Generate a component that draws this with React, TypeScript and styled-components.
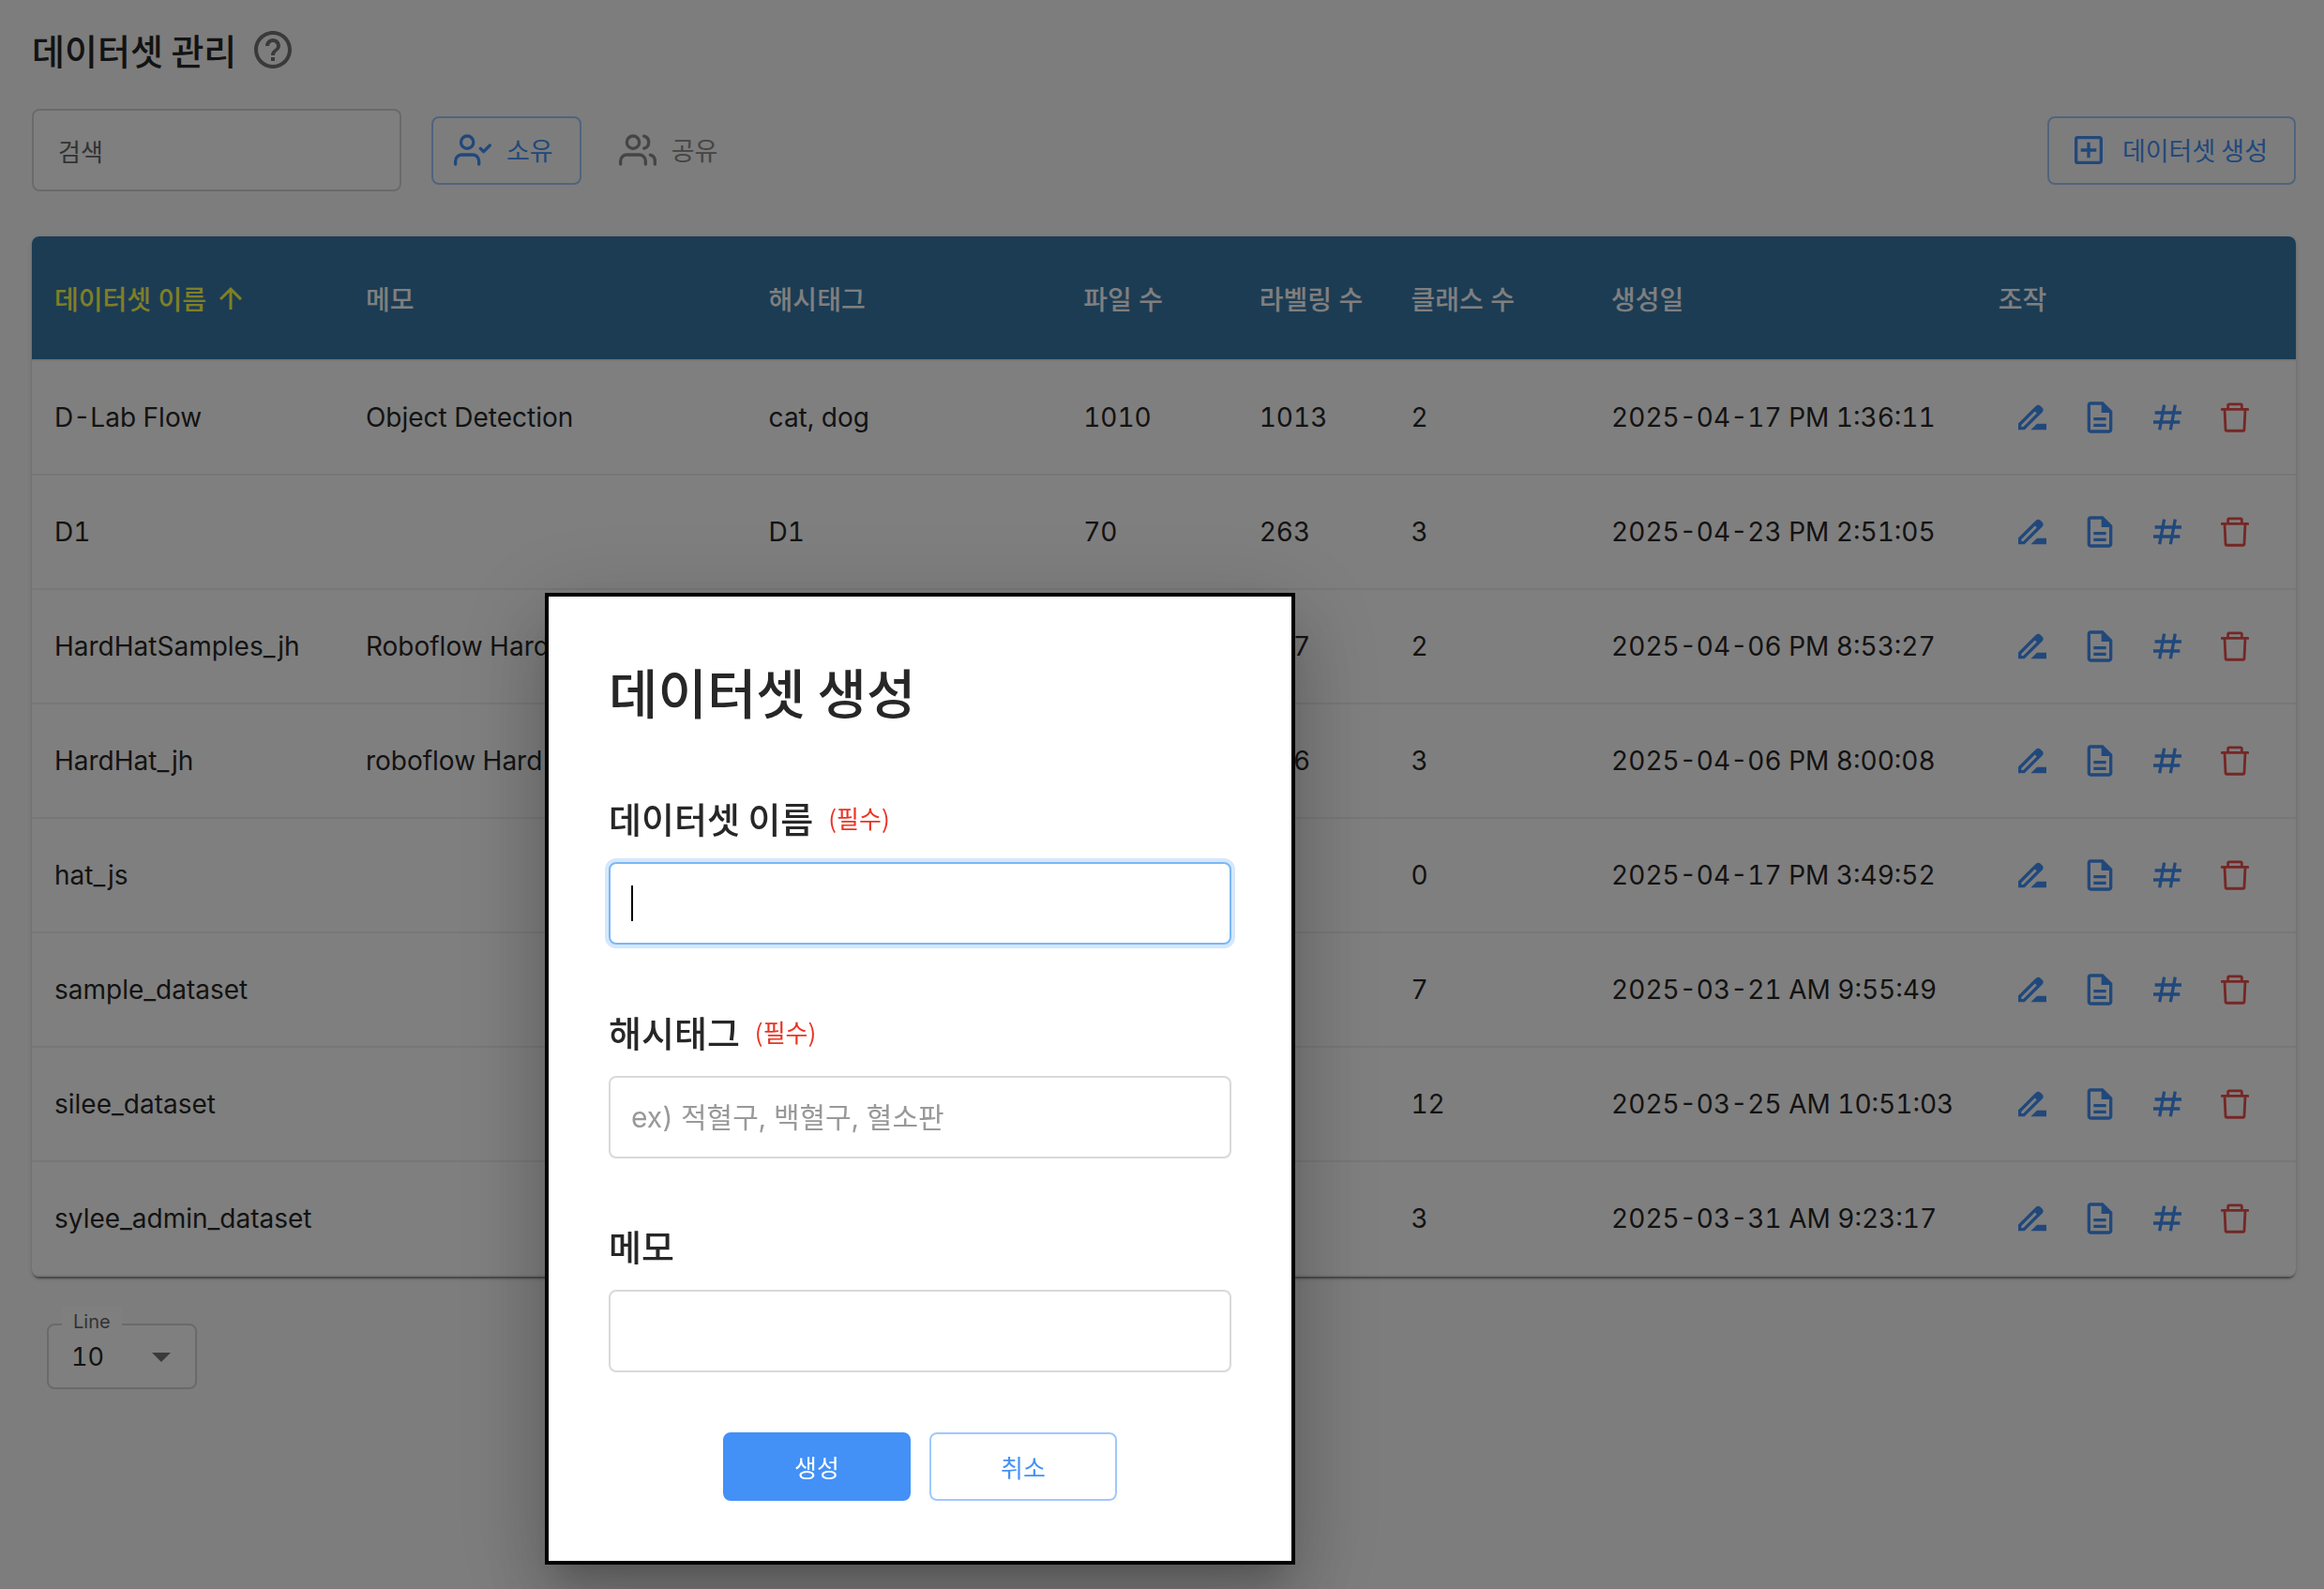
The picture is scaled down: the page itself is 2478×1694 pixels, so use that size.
import React, { useEffect, useRef } from 'react';
import styled, { createGlobalStyle } from 'styled-components';
import { MdHelpOutline, MdDriveFileRenameOutline, MdOutlineDescription, MdOutlineAddBox, MdArrowUpward, MdArrowDropDown } from 'react-icons/md';
import { BiHash } from 'react-icons/bi';
import { AiOutlineDelete } from 'react-icons/ai';
import { FiUserCheck, FiUsers } from 'react-icons/fi';

const korean = '"Noto Sans CJK KR", Inter, sans-serif';

const Global = createGlobalStyle`
  * { box-sizing: border-box; }
  body {
    margin: 0;
    background: #fbfbfb;
    color: #272727;
    font-family: Inter, "Noto Sans CJK KR", sans-serif;
    font-size: 28px;
    font-variant-numeric: tabular-nums;
  }
  button, input, select { font: inherit; color: inherit; }
  button { cursor: pointer; }
`;

const Page = styled.main`
  min-height: 100vh;
  padding: 24px 30px 64px 34px;
`;

const Heading = styled.header`
  display: flex;
  align-items: center;
  gap: 15px;
  height: 58px;
`;

const PageTitle = styled.h1`
  margin: 0;
  font-family: ${korean};
  font-size: 38px;
  line-height: 56px;
  font-weight: 500;
`;

const PlainIcon = styled.button<{ $tone: string }>`
  display: inline-flex;
  padding: 0;
  border: 0;
  background: none;
  color: ${(p) => p.$tone};
`;

const Toolbar = styled.div`
  display: flex;
  align-items: center;
  gap: 32px;
  margin: 34px 0 48px;
`;

const SearchBox = styled.input`
  width: 394px;
  height: 88px;
  padding: 0 26px;
  border: 2px solid #d4d4d4;
  border-radius: 8px;
  background: #fff;
  font-family: ${korean};
  font-size: 26px;
  &::placeholder { color: #666; opacity: 1; }
`;

const Owners = styled.div`
  display: flex;
  gap: 16px;
`;

const ToolButton = styled.button<{ $kind: 'outlined' | 'text' }>`
  display: flex;
  align-items: center;
  gap: 16px;
  height: 73px;
  padding: 0 28px 0 22px;
  border: 2px solid ${(p) => (p.$kind === 'outlined' ? '#a1c8fb' : 'transparent')};
  border-radius: 8px;
  background: none;
  color: ${(p) => (p.$kind === 'outlined' ? '#4391f7' : '#8a8a8a')};
  font-family: ${korean};
  font-size: 27px;
  line-height: 40px;
`;

const CreateButton = styled(ToolButton)`
  margin-left: auto;
`;

const TableCard = styled.section`
  overflow: hidden;
  border-radius: 8px;
  background: #fff;
  box-shadow: 0 4px 2px -2px rgba(0, 0, 0, 0.3), 0 2px 2px rgba(0, 0, 0, 0.14), 0 2px 6px rgba(0, 0, 0, 0.12);
`;

const Table = styled.table`
  width: 100%;
  border-spacing: 0;
  table-layout: fixed;
`;

const Col = styled.col<{ $share: number }>`
  width: ${(p) => p.$share}%;
`;

const HeadCell = styled.th<{ $active?: boolean }>`
  height: 133px;
  padding: 0 0 0 24px;
  border-bottom: 2px solid #efefef;
  background: #3879a8;
  background-clip: padding-box;
  color: ${(p) => (p.$active ? '#ffff4d' : '#fff')};
  font-size: 28px;
  font-weight: 500;
  text-align: left;
  white-space: nowrap;
`;

const SortButton = styled.button`
  display: flex;
  align-items: center;
  gap: 8px;
  padding: 0;
  border: 0;
  background: none;
`;

const Cell = styled.td`
  height: 122px;
  padding: 0 0 0 24px;
  border-bottom: 2px solid #efefef;
  white-space: nowrap;
`;

const Actions = styled.div`
  display: flex;
  gap: 32px;
  padding-left: 16px;
`;

const LineField = styled.div`
  position: relative;
  display: flex;
  align-items: center;
  width: 160px;
  height: 70px;
  margin: 50px 0 0 16px;
`;

const LineLabel = styled.label`
  position: absolute;
  top: -18px;
  left: 16px;
  padding: 0 12px;
  background: #fff;
  color: #666;
  font-size: 20px;
  line-height: 32px;
`;

const LineSelect = styled.select`
  width: 100%;
  height: 100%;
  padding: 0 24px;
  appearance: none;
  border: 2px solid #d4d4d4;
  border-radius: 8px;
  background: #fff;
  font-size: 27px;
`;

const SelectArrow = styled(MdArrowDropDown)`
  position: absolute;
  right: 14px;
  color: #757575;
  pointer-events: none;
`;

const Backdrop = styled.div`
  position: fixed;
  inset: 0;
  background: rgba(0, 0, 0, 0.5);
`;

const Dialog = styled.section`
  position: absolute;
  top: 632px;
  left: 581px;
  width: 800px;
  padding: 64px;
  border: 4px solid #000;
  background: #fff;
  box-shadow: 0 22px 30px -14px rgba(0, 0, 0, 0.2), 0 48px 76px 6px rgba(0, 0, 0, 0.14), 0 18px 92px 16px rgba(0, 0, 0, 0.12);
`;

const DialogTitle = styled.h2`
  margin: 0 0 66px;
  font-family: ${korean};
  font-size: 57px;
  line-height: 73px;
  font-weight: 500;
`;

const Fields = styled.div`
  display: grid;
  gap: 60px;
`;

const FieldLabel = styled.label`
  display: flex;
  align-items: center;
  gap: 16px;
  height: 64px;
  margin-bottom: 16px;
  font-family: ${korean};
  font-size: 38px;
  font-weight: 500;
`;

const Required = styled.span`
  color: #ea3323;
  font-size: 26px;
  font-weight: 400;
`;

const TextInput = styled.input`
  display: block;
  width: 100%;
  height: 88px;
  padding: 0 22px;
  border: 2px solid #d9d9d9;
  border-radius: 8px;
  outline: none;
  background: #fff;
  font-size: 30px;
  caret-color: #000;
  &::placeholder { color: #999; opacity: 1; }
  &:focus {
    border-color: #7ab8f5;
    box-shadow: 0 0 0 4px #d6e7fd;
  }
  &:focus:not([value]), &:focus[value=""] {
    caret-color: transparent;
    background: linear-gradient(#000, #000) 22px center / 2px 38px no-repeat #fff;
  }
`;

const Buttons = styled.div`
  display: flex;
  justify-content: center;
  gap: 20px;
  margin-top: 64px;
`;

const DialogButton = styled.button<{ $filled?: boolean }>`
  width: 200px;
  height: 73px;
  border: 2px solid ${(p) => (p.$filled ? '#4391f7' : '#a1c8fb')};
  border-radius: 8px;
  background: ${(p) => (p.$filled ? '#4391f7' : '#fff')};
  color: ${(p) => (p.$filled ? '#fff' : '#4391f7')};
  font-family: ${korean};
  font-size: 26px;
  line-height: 40px;
`;

const shares = [13.75, 17.8, 13.9, 7.77, 6.7, 8.85, 17.1, 14.13];
const heads = ['메모', '해시태그', '파일 수', '라벨링 수', '클래스 수', '생성일', '조작'];
const rows = [
  ['D-Lab Flow', 'Object Detection', 'cat, dog', '1010', '1013', '2', '2025-04-17 PM 1:36:11'],
  ['D1', '', 'D1', '70', '263', '3', '2025-04-23 PM 2:51:05'],
  ['HardHatSamples_jh', 'Roboflow Hard', '', '', '417', '2', '2025-04-06 PM 8:53:27'],
  ['HardHat_jh', 'roboflow Hard', '', '', '436', '3', '2025-04-06 PM 8:00:08'],
  ['hat_js', '', '', '', '', '0', '2025-04-17 PM 3:49:52'],
  ['sample_dataset', '', '', '', '', '7', '2025-03-21 AM 9:55:49'],
  ['silee_dataset', '', '', '', '', '12', '2025-03-25 AM 10:51:03'],
  ['sylee_admin_dataset', '', '', '', '', '3', '2025-03-31 AM 9:23:17'],
];

const blue = '#4391f7';

export default function App() {
  const nameRef = useRef<HTMLInputElement>(null);
  useEffect(() => {
    nameRef.current?.focus();
  }, []);

  return (
    <>
      <Global />
      <Page>
        <Heading>
          <PageTitle>데이터셋 관리</PageTitle>
          <PlainIcon $tone="#757575" aria-label="도움말"><MdHelpOutline size={48} /></PlainIcon>
        </Heading>
        <Toolbar>
          <SearchBox aria-label="검색" placeholder="검색" />
          <Owners>
            <ToolButton $kind="outlined"><FiUserCheck size={40} />소유</ToolButton>
            <ToolButton $kind="text"><FiUsers size={40} />공유</ToolButton>
          </Owners>
          <CreateButton $kind="outlined"><MdOutlineAddBox size={40} />데이터셋 생성</CreateButton>
        </Toolbar>
        <TableCard>
          <Table>
            <colgroup>{shares.map((s, i) => <Col key={i} $share={s} />)}</colgroup>
            <thead>
              <tr>
                <HeadCell $active><SortButton>데이터셋 이름<MdArrowUpward size={36} /></SortButton></HeadCell>
                {heads.map((h) => <HeadCell key={h}>{h}</HeadCell>)}
              </tr>
            </thead>
            <tbody>
              {rows.map((r) => (
                <tr key={r[0]}>
                  {r.map((c, i) => <Cell key={i}>{c}</Cell>)}
                  <Cell>
                    <Actions>
                      <PlainIcon $tone={blue} aria-label="이름 수정"><MdDriveFileRenameOutline size={40} /></PlainIcon>
                      <PlainIcon $tone={blue} aria-label="메모 수정"><MdOutlineDescription size={40} /></PlainIcon>
                      <PlainIcon $tone={blue} aria-label="해시태그 수정"><BiHash size={40} /></PlainIcon>
                      <PlainIcon $tone="#ea4f4a" aria-label="삭제"><AiOutlineDelete size={40} /></PlainIcon>
                    </Actions>
                  </Cell>
                </tr>
              ))}
            </tbody>
          </Table>
        </TableCard>
        <LineField>
          <LineSelect id="line" defaultValue="10"><option>10</option></LineSelect>
          <LineLabel htmlFor="line">Line</LineLabel>
          <SelectArrow size={48} />
        </LineField>
      </Page>
      <Backdrop>
        <Dialog role="dialog" aria-modal="true" aria-labelledby="dialog-title">
          <DialogTitle id="dialog-title">데이터셋 생성</DialogTitle>
          <Fields>
            <div>
              <FieldLabel htmlFor="name">데이터셋 이름<Required>(필수)</Required></FieldLabel>
              <TextInput id="name" ref={nameRef} />
            </div>
            <div>
              <FieldLabel htmlFor="tags">해시태그<Required>(필수)</Required></FieldLabel>
              <TextInput id="tags" placeholder="ex) 적혈구, 백혈구, 혈소판" />
            </div>
            <div>
              <FieldLabel htmlFor="memo">메모</FieldLabel>
              <TextInput id="memo" />
            </div>
          </Fields>
          <Buttons>
            <DialogButton $filled>생성</DialogButton>
            <DialogButton>취소</DialogButton>
          </Buttons>
        </Dialog>
      </Backdrop>
    </>
  );
}
